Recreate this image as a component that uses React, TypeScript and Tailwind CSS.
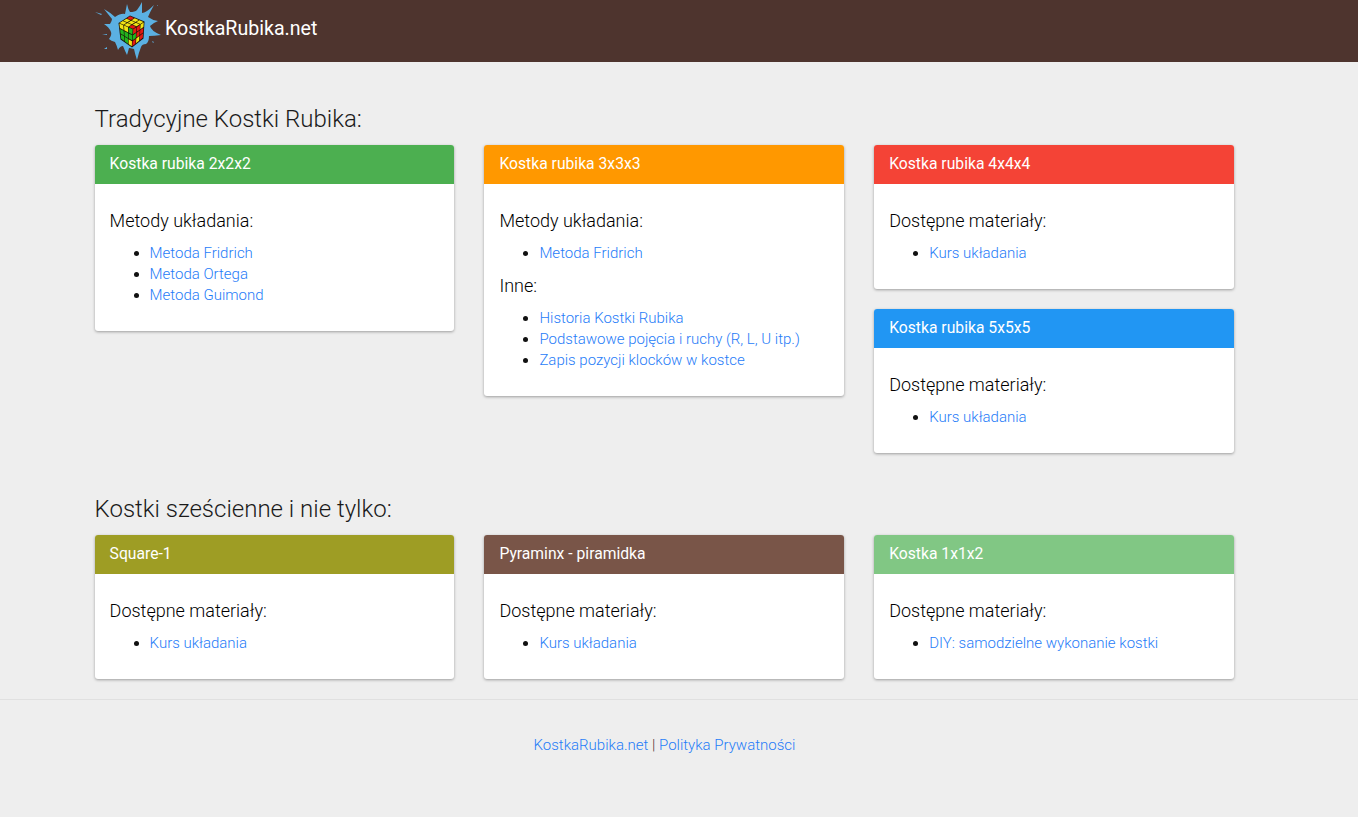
const font = "[font-family:Roboto,'Liberation_Sans',sans-serif]";

type P = [number, number];
const Y = "#f2e414";
const G = "#22b51e";
const R = "#e21a12";

function Face({ a, b, c, d, cells }: { a: P; b: P; c: P; d: P; cells: string[] }) {
  const at = (u: number, v: number): string => {
    const x = (1 - v) * ((1 - u) * a[0] + u * b[0]) + v * ((1 - u) * d[0] + u * c[0]);
    const y = (1 - v) * ((1 - u) * a[1] + u * b[1]) + v * ((1 - u) * d[1] + u * c[1]);
    return `${x.toFixed(2)},${y.toFixed(2)}`;
  };
  const g = 0.025;
  return (
    <>
      {cells.map((col, i) => {
        const u = (i % 3) / 3;
        const v = Math.floor(i / 3) / 3;
        const s = 1 / 3;
        return (
          <polygon
            key={i}
            fill={col}
            points={[at(u + g, v + g), at(u + s - g, v + g), at(u + s - g, v + s - g), at(u + g, v + s - g)].join(" ")}
          />
        );
      })}
    </>
  );
}

function Logo() {
  const T: P = [36, 16];
  const L: P = [25, 23];
  const Ri: P = [50, 22];
  const C: P = [39, 29];
  const B: P = [38, 47];
  const LB: P = [27, 39];
  const RB: P = [49, 38];
  return (
    <svg width="70" height="62" viewBox="0 0 70 62" className="shrink-0">
      <path
        fill="#5bb0e2"
        d="M10 9 Q17 13 21 17 Q27 13 31 14 Q32 9 33 4 Q34 9 36 12 Q41 12 43 10 Q46 6 48 2 Q48 8 48 13 Q52 13 60 5 Q56 12 54 17 Q58 20 64 21 Q59 23 56 26 Q57 31 67 35 Q60 36 55 36 Q55 42 52 44 Q48 44 47 47 Q45 52 43 60 Q41 54 40 49 Q36 48 35 48 Q34 52 33 55 Q31 51 29 46 Q26 46 24 50 Q23 46 21 42 Q17 41 15 39 Q18 35 17 32 Q15 27 10 24 Q14 24 16 24 Q18 21 18 19 Q14 14 10 9 Z"
      />
      <path fill="#5bb0e2" d="M1 12l7 2-1 1zM10 49l3-2 0 2zM8 35l5-1 0 1zM58 41l2 1-1 1zM63 5l1 0 0 1z" />
      <path fill="#1a1208" d="M36 15.5 L50.5 21.5 L49.5 38.5 L38 47.5 L26.5 39.5 L24.5 23 Z" />
      <Face a={T} b={Ri} c={C} d={L} cells={[R, Y, Y, Y, Y, Y, Y, Y, R]} />
      <Face a={L} b={C} c={B} d={LB} cells={[Y, Y, G, G, G, G, G, G, Y]} />
      <Face a={C} b={Ri} c={RB} d={B} cells={[R, R, Y, G, R, R, R, Y, R]} />
    </svg>
  );
}

type Section = { title: string; links: string[] };
type CardProps = { title: string; color: string; sections: Section[] };

function Card({ title, color, sections }: CardProps) {
  return (
    <div className="rounded-[3px] bg-white shadow-[0_1px_3px_rgba(0,0,0,0.35)] overflow-hidden">
      <div className={`h-[39px] px-[15px] flex items-center text-white text-[15.7px] font-normal pb-[2px] ${color}`}>{title}</div>
      <div className="px-[15px] pt-[27px] pb-[15px]">
        {sections.map((s) => (
          <div key={s.title} className="mb-[12px] last:mb-[10px]">
            <h4 className="text-[18px] leading-[20px] font-light text-[#000] mb-[12px]">{s.title}</h4>
            <ul className="list-disc pl-[40px] text-[#111]">
              {s.links.map((l) => (
                <li key={l} className="leading-[21px] text-[15px] font-light">
                  <a className="text-[#1f7cf8]">{l}</a>
                </li>
              ))}
            </ul>
          </div>
        ))}
      </div>
    </div>
  );
}

const kurs: Section[] = [{ title: "Dostępne materiały:", links: ["Kurs układania"] }];

export default function App() {
  return (
    <div className={`min-h-[817px] bg-[#eeeeee] ${font}`}>
      <header className="h-[62px] bg-[#4e342e] pl-[94px] flex items-center overflow-hidden">
        <Logo />
        <span className="text-white text-[19.6px] font-normal ml-[1px] -mt-[5px]">KostkaRubika.net</span>
      </header>
      <main className="w-[1139.4px] ml-[94.6px]">
        <h3 className="text-[24px] font-light text-[#1a1a1a] leading-[26px] pt-[44px] mb-[13px]">Tradycyjne Kostki Rubika:</h3>
        <div className="grid grid-cols-3 gap-x-[30px] items-start">
          <Card title="Kostka rubika 2x2x2" color="bg-[#4caf50]" sections={[{ title: "Metody układania:", links: ["Metoda Fridrich", "Metoda Ortega", "Metoda Guimond"] }]} />
          <Card title="Kostka rubika 3x3x3" color="bg-[#ff9800]" sections={[
            { title: "Metody układania:", links: ["Metoda Fridrich"] },
            { title: "Inne:", links: ["Historia Kostki Rubika", "Podstawowe pojęcia i ruchy (R, L, U itp.)", "Zapis pozycji klocków w kostce"] },
          ]} />
          <div className="flex flex-col gap-[20px]">
            <Card title="Kostka rubika 4x4x4" color="bg-[#f44336]" sections={kurs} />
            <Card title="Kostka rubika 5x5x5" color="bg-[#2196f3]" sections={kurs} />
          </div>
        </div>
        <h3 className="text-[24px] font-light text-[#1a1a1a] leading-[26px] pt-[43px] mb-[13px]">Kostki sześcienne i nie tylko:</h3>
        <div className="grid grid-cols-3 gap-x-[30px] items-start">
          <Card title="Square-1" color="bg-[#9e9d24]" sections={kurs} />
          <Card title="Pyraminx - piramidka" color="bg-[#795548]" sections={kurs} />
          <Card title="Kostka 1x1x2" color="bg-[#81c784]" sections={[{ title: "Dostępne materiały:", links: ["DIY: samodzielne wykonanie kostki"] }]} />
        </div>
      </main>
      <footer className="mt-[20px] border-t border-[#e0e0e0] pt-[35px] text-[15px] font-light text-[#4e342e] leading-[21px]">
        <div className="w-[1329px] text-center">
          <a className="text-[#1f7cf8]">KostkaRubika.net</a> | <a className="text-[#1f7cf8]">Polityka Prywatności</a>
        </div>
      </footer>
    </div>
  );
}
